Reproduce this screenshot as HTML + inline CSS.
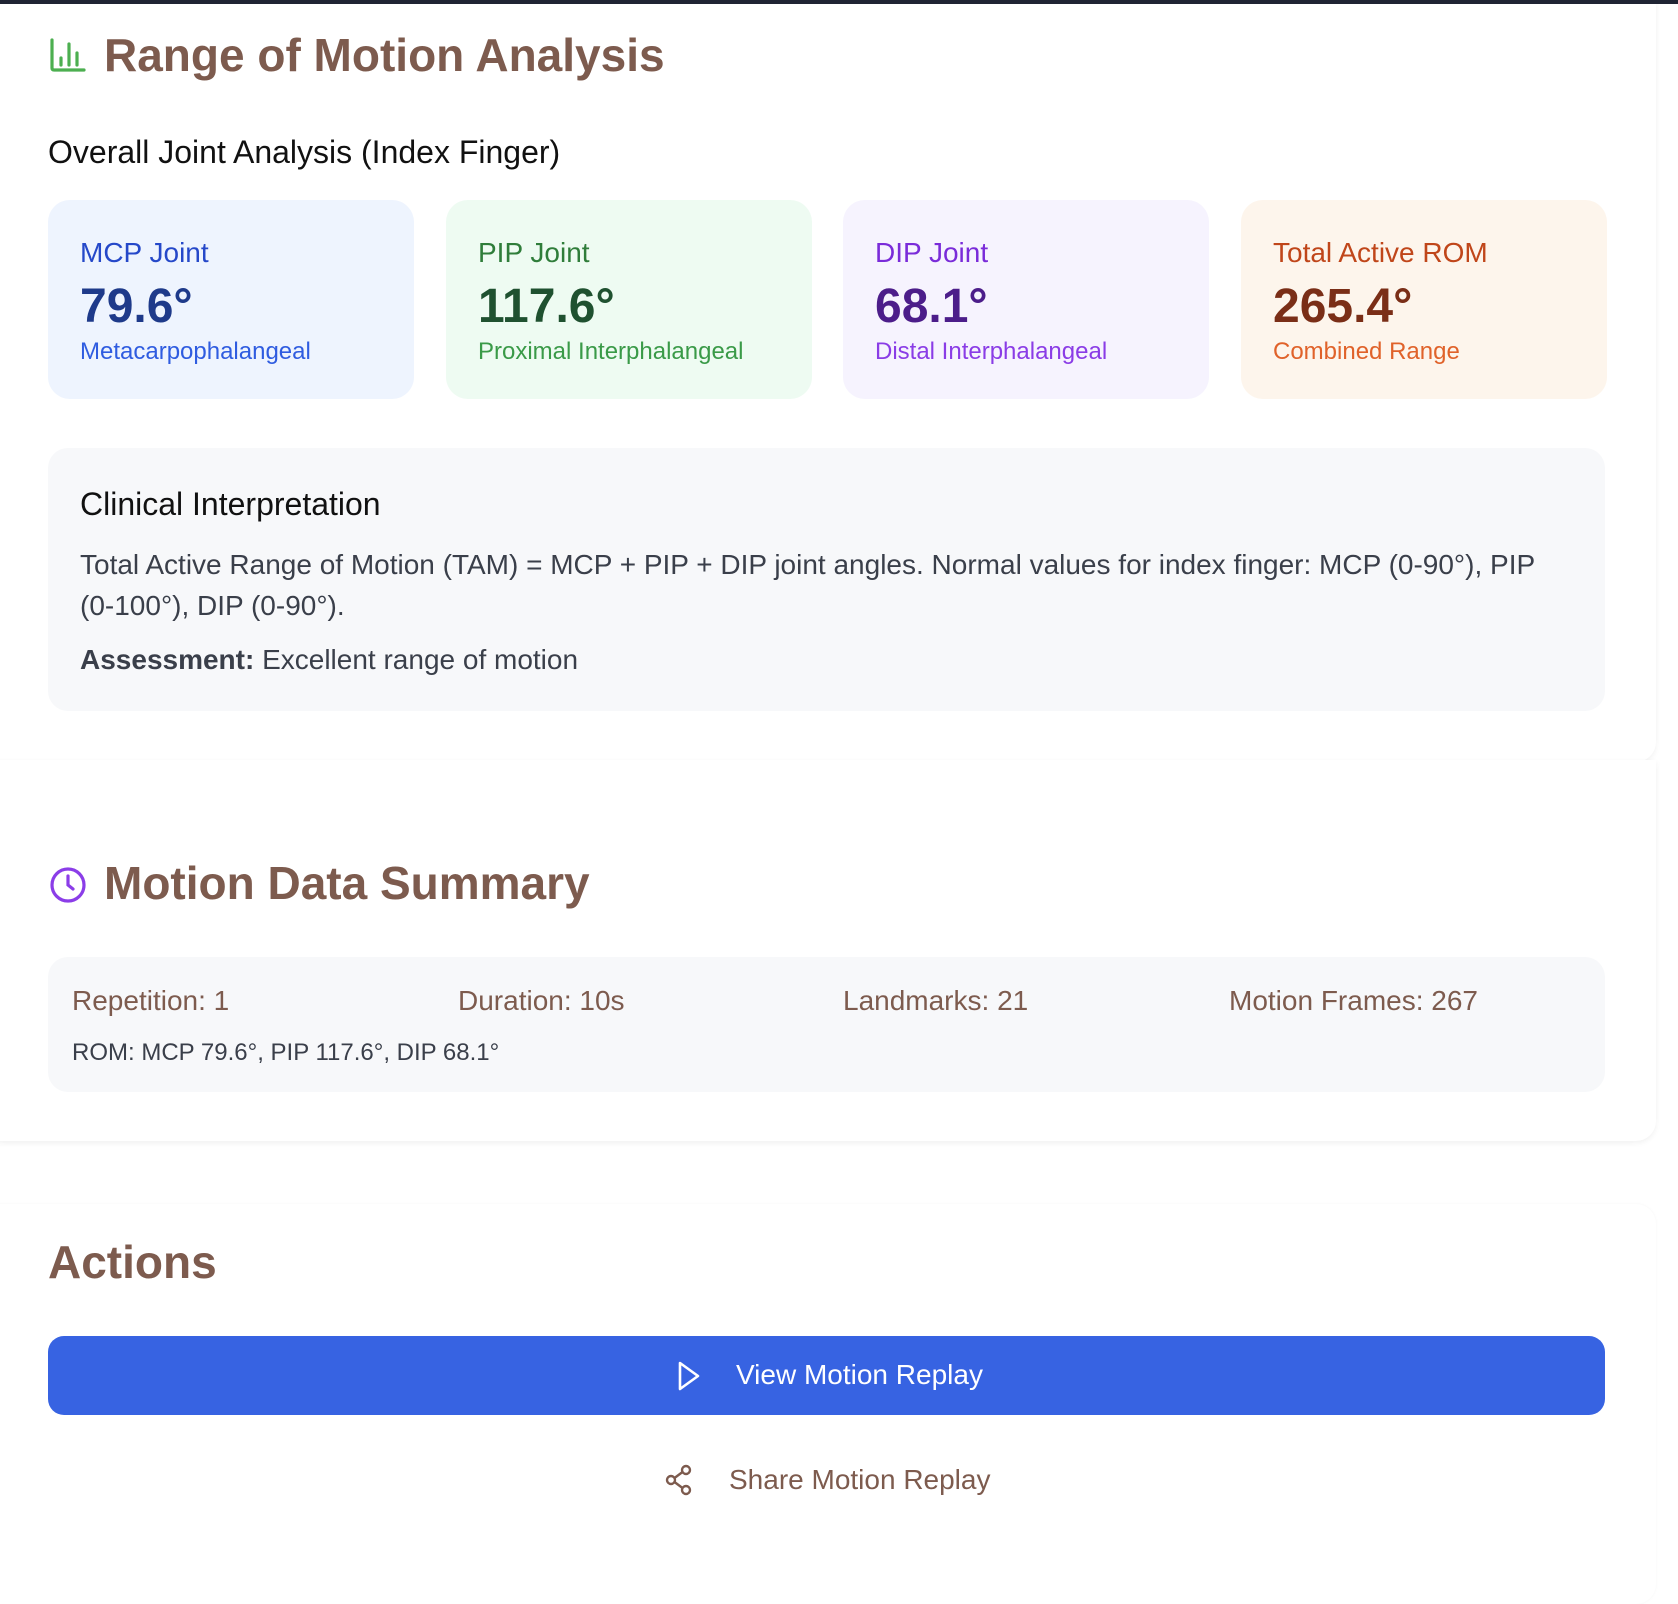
<!DOCTYPE html>
<html><head><meta charset="utf-8"><style>
*{margin:0;padding:0;box-sizing:border-box}
body{width:1678px;height:1540px;background:#fff;font-family:"Liberation Sans",Arial,sans-serif;position:relative;overflow:hidden}
.a{position:absolute;white-space:nowrap}
.panel{position:absolute;background:#fff;border-radius:20px;box-shadow:0 2px 6px rgba(0,0,0,0.06)}
.h{color:#7d5b4e;font-weight:bold;font-size:46px}
.card{position:absolute;top:200px;width:366px;height:199px;border-radius:22px}
.card .l{position:absolute;left:32px;top:37px;font-size:28px}
.card .v{position:absolute;left:32px;top:79px;font-size:48px;font-weight:bold}
.card .s{position:absolute;left:32px;top:138px;font-size:24px}
.box{position:absolute;left:48px;width:1557px;background:#f7f8fa;border-radius:20px}
.nw{white-space:nowrap}
</style></head><body>
<div class="panel" style="left:-20px;top:-20px;width:1676px;height:782px"></div>
<div class="panel" style="left:-20px;top:760px;width:1676px;height:381px;border-radius:0 0 20px 20px"></div>
<div class="panel" style="left:-20px;top:1204px;width:1676px;height:400px;box-shadow:0 0 3px rgba(0,0,0,0.04)"></div>
<div class="a" style="left:0;top:0;width:1678px;height:4px;background:#1f2433"></div>

<svg class="a" style="left:48px;top:36px" width="40" height="40" viewBox="0 0 40 40" fill="none" stroke="#4caf50" stroke-width="3.2" stroke-linecap="round"><path d="M4 4V32Q4 34 6 34H36"/><path d="M13 22V29M21 8V29M29 17V29"/></svg>
<div class="a h" style="left:104px;top:28px">Range of Motion Analysis</div>
<div class="a" style="left:48px;top:134px;font-size:32px;color:#111">Overall Joint Analysis (Index Finger)</div>

<div class="card" style="left:48px;background:#eef4fe"><div class="l" style="color:#2548c9">MCP Joint</div><div class="v" style="color:#1e3a8a">79.6°</div><div class="s" style="color:#2f5ce0">Metacarpophalangeal</div></div>
<div class="card" style="left:446px;background:#eefbf2"><div class="l" style="color:#2f7d3a">PIP Joint</div><div class="v" style="color:#1f5130">117.6°</div><div class="s" style="color:#3a9a48">Proximal Interphalangeal</div></div>
<div class="card" style="left:843px;background:#f6f3fe"><div class="l" style="color:#7a2bd9">DIP Joint</div><div class="v" style="color:#4c1d8a">68.1°</div><div class="s" style="color:#8a3ce6">Distal Interphalangeal</div></div>
<div class="card" style="left:1241px;background:#fdf5ec"><div class="l" style="color:#c0461a">Total Active ROM</div><div class="v" style="color:#7a2e17">265.4°</div><div class="s" style="color:#e0622a">Combined Range</div></div>

<div class="box" style="top:448px;height:263px">
<div class="a" style="left:32px;top:38px;font-size:32px;color:#111">Clinical Interpretation</div>
<div class="a" style="left:32px;top:96px;font-size:28px;line-height:41px;color:#3a3f4a;white-space:normal;width:1500px">Total Active Range of Motion (TAM) = MCP + PIP + DIP joint angles. Normal values for index finger: MCP <span class="nw">(0-90°),</span> PIP <span class="nw">(0-100°),</span> DIP <span class="nw">(0-90°).</span></div>
<div class="a" style="left:32px;top:196px;font-size:28px;color:#3a3f4a"><b>Assessment:</b> Excellent range of motion</div>
</div>

<svg class="a" style="left:49px;top:866px" width="38" height="38" viewBox="0 0 38 38" fill="none" stroke="#8b3de8" stroke-width="3.2" stroke-linecap="round"><circle cx="19" cy="19" r="16"/><path d="M19 10V19L24 23"/></svg>
<div class="a h" style="left:104px;top:856px">Motion Data Summary</div>
<div class="box" style="top:957px;height:135px">
<div class="a" style="left:24px;top:28px;font-size:28px;color:#7d5b4e">Repetition: 1</div>
<div class="a" style="left:410px;top:28px;font-size:28px;color:#7d5b4e">Duration: 10s</div>
<div class="a" style="left:795px;top:28px;font-size:28px;color:#7d5b4e">Landmarks: 21</div>
<div class="a" style="left:1181px;top:28px;font-size:28px;color:#7d5b4e">Motion Frames: 267</div>
<div class="a" style="left:24px;top:82px;font-size:24px;color:#3a3f4a">ROM: MCP 79.6°, PIP 117.6°, DIP 68.1°</div>
</div>

<div class="a h" style="left:48px;top:1235px">Actions</div>
<div class="a" style="left:48px;top:1336px;width:1557px;height:79px;background:#3763e2;border-radius:16px"></div>
<svg class="a" style="left:676px;top:1360px" width="26" height="32" viewBox="0 0 26 32" fill="none" stroke="#fff" stroke-width="2.6" stroke-linejoin="round"><path d="M4 3L22 16L4 29Z"/></svg>
<div class="a" style="left:736px;top:1359px;font-size:28px;color:#fff">View Motion Replay</div>
<svg class="a" style="left:664px;top:1464px" width="30" height="32" viewBox="0 0 30 32" fill="none" stroke="#7d5b4e" stroke-width="2.4"><circle cx="22" cy="6" r="4"/><circle cx="7" cy="16" r="4"/><circle cx="22" cy="26" r="4"/><path d="M10.5 14L18.5 8M10.5 18L18.5 24"/></svg>
<div class="a" style="left:729px;top:1464px;font-size:28px;color:#7d5b4e">Share Motion Replay</div>
</body></html>
